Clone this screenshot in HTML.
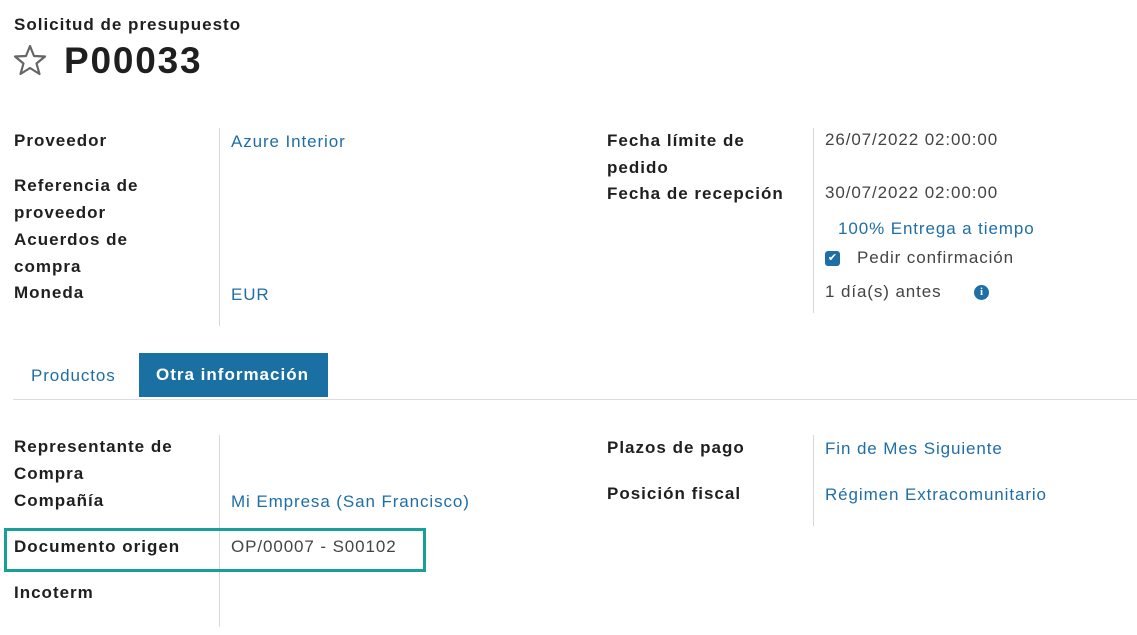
<!DOCTYPE html>
<html><head><meta charset="utf-8"><style>
body{margin:0;width:1137px;height:635px;background:#fff;font-family:"Liberation Sans",sans-serif;color:#222;overflow:hidden;position:relative}
.a{position:absolute;white-space:nowrap;font-size:17px;line-height:27px;letter-spacing:0.9px}
.b{font-weight:bold;color:#1f1f1f;letter-spacing:1px}
.l{color:#1f6ea6}
.v{color:#444}
.sep{position:absolute;width:1px;background:#d8d8d8}
</style></head><body>
<div class="a b" style="left:14px;top:11px;font-size:17px">Solicitud de presupuesto</div>
<svg style="position:absolute;left:13px;top:43px" width="34" height="34" viewBox="0 0 34 34"><path d="M17 3 L21 13 L32 13.5 L23.5 20.5 L26.5 31 L17 25 L7.5 31 L10.5 20.5 L2 13.5 L13 13 Z" fill="none" stroke="#666" stroke-width="2.2" stroke-linejoin="round"/></svg>
<div class="a b" style="left:64px;top:40px;font-size:37px;line-height:42px;letter-spacing:1.8px">P00033</div>

<div class="sep" style="left:219px;top:128px;height:198px"></div>
<div class="sep" style="left:813px;top:128px;height:185px"></div>
<div class="a b" style="left:14px;top:127px">Proveedor</div>
<div class="a b" style="left:14px;top:172px">Referencia de<br>proveedor</div>
<div class="a b" style="left:14px;top:226px">Acuerdos de<br>compra</div>
<div class="a b" style="left:14px;top:279px">Moneda</div>
<div class="a l" style="left:231px;top:128px">Azure Interior</div>
<div class="a l" style="left:231px;top:281px">EUR</div>

<div class="a b" style="left:607px;top:127px">Fecha límite de<br>pedido</div>
<div class="a b" style="left:607px;top:180px">Fecha de recepción</div>
<div class="a v" style="left:825px;top:126px">26/07/2022 02:00:00</div>
<div class="a v" style="left:825px;top:179px">30/07/2022 02:00:00</div>
<div class="a l" style="left:838px;top:215px">100% Entrega a tiempo</div>
<div style="position:absolute;left:825px;top:251px;width:15px;height:15px;background:#1f6ea6;border-radius:3px;color:#fff;font-size:11px;line-height:15px;text-align:center">✔</div>
<div class="a v" style="left:857px;top:244px">Pedir confirmación</div>
<div class="a v" style="left:825px;top:278px">1 día(s) antes</div>
<div style="position:absolute;left:974px;top:285px;width:15px;height:15px;border-radius:50%;background:#1f6ea6;color:#fff;font:bold 11px/15px 'Liberation Serif',serif;text-align:center">i</div>

<div class="a l" style="left:31px;top:362px">Productos</div>
<div style="position:absolute;left:139px;top:353px;width:189px;height:44px;background:#1a6fa3"></div>
<div class="a b" style="left:156px;top:361px;color:#fff">Otra información</div>
<div style="position:absolute;left:13px;top:399px;width:1124px;height:1px;background:#ddd"></div>

<div class="sep" style="left:219px;top:435px;height:192px"></div>
<div class="sep" style="left:813px;top:435px;height:91px"></div>
<div class="a b" style="left:14px;top:433px">Representante de<br>Compra</div>
<div class="a b" style="left:14px;top:487px">Compañía</div>
<div class="a b" style="left:14px;top:533px">Documento origen</div>
<div class="a b" style="left:14px;top:579px">Incoterm</div>
<div class="a l" style="left:231px;top:488px">Mi Empresa (San Francisco)</div>
<div class="a v" style="left:231px;top:533px">OP/00007 - S00102</div>
<div class="a b" style="left:607px;top:434px">Plazos de pago</div>
<div class="a b" style="left:607px;top:480px">Posición fiscal</div>
<div class="a l" style="left:825px;top:435px">Fin de Mes Siguiente</div>
<div class="a l" style="left:825px;top:481px">Régimen Extracomunitario</div>
<div style="position:absolute;left:4px;top:528px;width:416px;height:38px;border:3px solid #17a09a"></div>
</body></html>
